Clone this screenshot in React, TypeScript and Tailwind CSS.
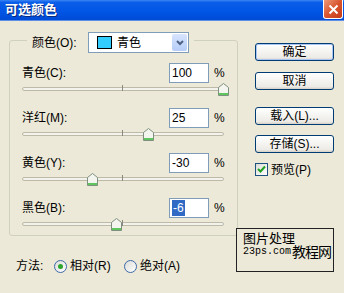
import type { ReactNode } from 'react'

const rows = [
  { label: '青色(C):', value: '100', n: 100 },
  { label: '洋红(M):', value: '25', n: 25 },
  { label: '黄色(Y):', value: '-30', n: -30 },
  { label: '黑色(B):', value: '-6', n: -6, selected: true },
]

function Thumb() {
  return (
    <svg width="11" height="13" viewBox="0 0 11 13">
      <path d="M0.5,4.5 L5.5,0.5 L10.5,4.5 L10.5,12.5 L0.5,12.5 Z" fill="#f5f5f0" stroke="#7f8f7f" />
      <path d="M1,11 L10,11" stroke="#5fc65f" strokeWidth="2" />
    </svg>
  )
}

function Slider({ n }: { n: number }) {
  // -100..100 across the track
  const left = ((n + 100) / 200) * 201 - 5
  return (
    <div className="relative h-[14px] w-[202px]">
      <div className="mt-[4px] h-[4px] rounded-[2px] border border-[#bdbaa8] bg-[#f3f2ec]" />
      <div className="absolute left-[100px] top-[2px] h-[6px] w-px bg-[#8c8a7e]" />
      <div className="absolute top-0" style={{ left }}>
        <Thumb />
      </div>
    </div>
  )
}

function XpButton({ children, main }: { children: ReactNode; main?: boolean }) {
  return (
    <div
      className={
        main
          ? 'flex h-[18px] w-[79px] items-center justify-center rounded-[3px] border border-[#003c74] bg-[linear-gradient(180deg,#ffffff,#ecebe6_85%,#d6d0c5)] shadow-[inset_0_0_0_1px_#a9c5f5]'
          : 'flex h-[18px] w-[79px] items-center justify-center rounded-[3px] border border-[#003c74] bg-[linear-gradient(180deg,#ffffff,#ecebe6_85%,#d6d0c5)]'
      }
    >
      {children}
    </div>
  )
}

function Radio({ on }: { on?: boolean }) {
  return (
    <div className="flex h-[13px] w-[13px] items-center justify-center rounded-full border border-[#3d69a8] bg-[linear-gradient(135deg,#dcdcd7,#ffffff)]">
      {on && <div className="h-[5px] w-[5px] rounded-full bg-[#2ca52c]" />}
    </div>
  )
}

export default function App() {
  return (
    <div className="relative flex h-[293px] w-[344px] flex-col overflow-hidden bg-[#ECE9D8] font-['Liberation_Sans','Noto_Sans_CJK_SC',sans-serif] text-[12px] leading-none text-black">
      {/* title bar */}
      <div className="flex h-[21px] items-start border-b border-[#5d8fe6] bg-[linear-gradient(180deg,#3b86f5_0%,#0a5ee8_12%,#0055e5_60%,#004bd6_100%)]">
        <div className="pl-[5px] pt-[3px] text-[13px] font-bold text-white [text-shadow:1px_1px_#0a2a7a]">可选颜色</div>
        <div className="ml-auto mr-[1px] flex h-[19px] w-[20px] items-center justify-center rounded-b-[3px] border border-t-0 border-white bg-[linear-gradient(135deg,#ec9a7a,#d8552f_50%,#c43a18)]">
          <svg width="11" height="11" viewBox="0 0 11 11">
            <path d="M1.5,1.5 L9.5,9.5 M9.5,1.5 L1.5,9.5" stroke="#fff" strokeWidth="2" />
          </svg>
        </div>
      </div>

      <div className="flex">
        {/* left column */}
        <div className="flex w-[240px] flex-col">
          <div className="ml-[9px] mt-[19px] w-[229px] rounded-[3px] border border-[#d0d0bf] pb-[3px]">
            <div className="-mt-[9px] ml-[17px] flex w-fit items-center bg-[#ECE9D8] px-[5px]">
              <span className="w-[56px]">颜色(O):</span>
              <div className="flex h-[21px] w-[101px] items-center border border-[#7f9db9] bg-white">
                <div className="ml-[8px] h-[13px] w-[15px] border border-black bg-[#33ccff]" />
                <span className="ml-[5px] flex-1">青色</span>
                <div className="mr-px flex h-[17px] w-[15px] items-center justify-center rounded-[2px] bg-[linear-gradient(180deg,#d7e4fd,#b6cdf8)]">
                  <svg width="8" height="6" viewBox="0 0 8 6">
                    <path d="M1,1 L4,4 L7,1" fill="none" stroke="#4d6185" strokeWidth="2" />
                  </svg>
                </div>
              </div>
            </div>

            <div className="flex flex-col gap-[11px] pl-[12px] pt-[10px]">
              {rows.map((r) => (
                <div key={r.label} className="flex flex-col">
                  <div className="flex h-[20px] items-center">
                    <span className="w-[147px]">{r.label}</span>
                    <div className="flex h-[20px] w-[40px] items-center border border-[#7f9db9] bg-white pl-[2px]">
                      {r.selected ? <span className="bg-[#316ac5] px-px py-[2px] text-white">{r.value}</span> : <span>{r.value}</span>}
                    </div>
                    <span className="ml-[5px]">%</span>
                  </div>
                  <Slider n={r.n} />
                </div>
              ))}
            </div>
          </div>

          <div className="ml-[16px] mt-[23px] flex h-[14px] items-center">
            <span className="w-[38px]">方法:</span>
            <Radio on />
            <span className="ml-[3px] w-[54px]">相对(R)</span>
            <Radio />
            <span className="ml-[3px]">绝对(A)</span>
          </div>
        </div>

        {/* right column */}
        <div className="flex flex-col pl-[15px] pt-[22px]">
          <XpButton main>确定</XpButton>
          <div className="mt-[11px]">
            <XpButton>取消</XpButton>
          </div>
          <div className="mt-[17px]">
            <XpButton>载入(L)...</XpButton>
          </div>
          <div className="mt-[10px]">
            <XpButton>存储(S)...</XpButton>
          </div>
          <div className="mt-[10px] flex items-center">
            <div className="flex h-[13px] w-[13px] items-center justify-center border border-[#1c5180] bg-[linear-gradient(135deg,#dcdcd7,#ffffff)]">
              <svg width="9" height="9" viewBox="0 0 9 9">
                <path d="M1,4 L3.5,6.5 L8,1.5" fill="none" stroke="#21a121" strokeWidth="2" />
              </svg>
            </div>
            <span className="ml-[3px]">预览(P)</span>
          </div>
        </div>
      </div>

      {/* watermark stamp */}
      <div className="absolute left-[236px] top-[228px] h-[44px] w-[98px] border border-[#222] bg-[#ECE9D8]">
        <div className="pl-[6px] pt-[3px] text-[13px]">图片处理</div>
        <div className="flex items-end whitespace-nowrap pl-[6px]">
          <span className="pb-[2px] font-['Liberation_Mono',monospace] text-[10px]">23ps.com</span>
          <span className="ml-px text-[14px] tracking-[-1px]">教程网</span>
        </div>
      </div>
    </div>
  )
}
